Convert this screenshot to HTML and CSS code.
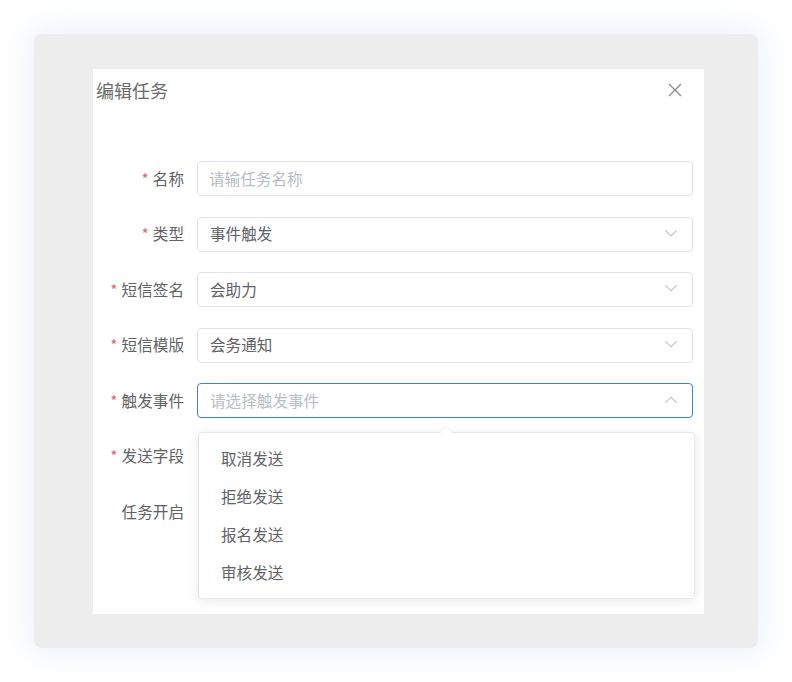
FILE: index.html
```html
<!DOCTYPE html>
<html lang="zh-CN">
<head>
    <meta charset="UTF-8">
    <meta name="viewport" content="width=device-width, initial-scale=1.0">
    <title>编辑任务</title>
    <link rel="stylesheet" href="styles.css">
</head>
<body>
    <!-- Gray mask panel holding the dialog -->
    <div class="panel">
        <div class="dialog">
            <div class="dialog-header">
                <span class="dialog-title">编辑任务</span>
                <svg class="close-icon" viewBox="0 0 14 14" width="14" height="14">
                    <path d="M1 1 L13 13 M13 1 L1 13" />
                </svg>
            </div>

            <form class="task-form">
                <div class="form-item">
                    <label class="form-label required">名称</label>
                    <div class="form-control">
                        <input class="text-input" type="text" placeholder="请输任务名称">
                    </div>
                </div>

                <div class="form-item">
                    <label class="form-label required">类型</label>
                    <div class="form-control">
                        <div class="select">
                            <span class="select-value">事件触发</span>
                            <svg class="arrow" viewBox="0 0 12 7" width="12" height="7"><path d="M0.5 0.5 L6 6 L11.5 0.5" /></svg>
                        </div>
                    </div>
                </div>

                <div class="form-item">
                    <label class="form-label required">短信签名</label>
                    <div class="form-control">
                        <div class="select">
                            <span class="select-value">会助力</span>
                            <svg class="arrow" viewBox="0 0 12 7" width="12" height="7"><path d="M0.5 0.5 L6 6 L11.5 0.5" /></svg>
                        </div>
                    </div>
                </div>

                <div class="form-item">
                    <label class="form-label required">短信模版</label>
                    <div class="form-control">
                        <div class="select">
                            <span class="select-value">会务通知</span>
                            <svg class="arrow" viewBox="0 0 12 7" width="12" height="7"><path d="M0.5 0.5 L6 6 L11.5 0.5" /></svg>
                        </div>
                    </div>
                </div>

                <div class="form-item">
                    <label class="form-label required">触发事件</label>
                    <div class="form-control">
                        <div class="select is-focus">
                            <span class="select-value placeholder">请选择触发事件</span>
                            <svg class="arrow" viewBox="0 0 12 7" width="12" height="7"><path d="M0.5 6.5 L6 1 L11.5 6.5" /></svg>
                        </div>
                        <!-- open dropdown -->
                        <div class="dropdown">
                            <span class="dropdown-caret"></span>
                            <ul class="dropdown-list">
                                <li>取消发送</li>
                                <li>拒绝发送</li>
                                <li>报名发送</li>
                                <li>审核发送</li>
                            </ul>
                        </div>
                    </div>
                </div>

                <div class="form-item">
                    <label class="form-label required">发送字段</label>
                    <div class="form-control"></div>
                </div>

                <div class="form-item">
                    <label class="form-label">任务开启</label>
                    <div class="form-control"></div>
                </div>
            </form>
        </div>
    </div>
</body>
</html>
```

FILE: styles.css
```css
* {
    margin: 0;
    padding: 0;
    box-sizing: border-box;
}

html, body {
    height: 100%;
    background: #ffffff;
    font-family: 'Noto Sans CJK SC', 'Noto Sans', sans-serif;
    color: #606266;
}

body {
    padding: 34px;
}

.panel {
    width: 724px;
    height: 614px;
    padding: 35px 54px 34px 59px;
    background: #ededed;
    border-radius: 8px;
    box-shadow: 0 0 30px 6px rgba(214, 226, 245, 0.45);
}

.dialog {
    width: 611px;
    height: 545px;
    background: #ffffff;
}

.dialog-header {
    display: flex;
    justify-content: space-between;
    align-items: center;
    height: 44px;
    padding: 0 22px 2px 3px;
}

.dialog-title {
    font-size: 18px;
    color: #6b6b6b;
    line-height: 24px;
}

.close-icon {
    fill: none;
    stroke: #8d8f94;
    stroke-width: 1.4;
}

.task-form {
    margin-top: 48px;
    padding-right: 11px;
}

.form-item {
    display: flex;
    align-items: center;
    height: 35px;
    margin-bottom: 20.6px;
}

.form-label {
    width: 104px;
    padding: 0 13px 2px 0;
    text-align: right;
    font-size: 15.6px;
    color: #606266;
    flex-shrink: 0;
}

.form-label.required::before {
    content: '*';
    color: #e06a6a;
    margin-right: 4px;
}

.form-control {
    position: relative;
    flex: 1;
    height: 35px;
}

.text-input {
    width: 100%;
    height: 35px;
    padding: 0 11px 2px;
    border: 1px solid #e1e1ea;
    border-radius: 4px;
    font-family: inherit;
    font-size: 15.6px;
    color: #606266;
    outline: none;
}

.text-input::placeholder {
    color: #b8bcc4;
}

.select {
    display: flex;
    justify-content: space-between;
    align-items: center;
    height: 35px;
    padding: 0 15px 2px 12px;
    border: 1px solid #e1e1ea;
    border-radius: 4px;
    font-size: 15.6px;
}

.select.is-focus {
    border-color: #3f7fe4;
}

.select-value {
    color: #606266;
}

.select-value.placeholder {
    color: #b8bcc4;
}

.arrow {
    fill: none;
    stroke: #c6c8cd;
    stroke-width: 1.2;
}

/* Dropdown of the trigger event select */
.dropdown {
    position: absolute;
    z-index: 10;
    top: 49px;
    left: 1px;
    width: 497px;
    background: #ffffff;
    border: 1px solid #e4e7ed;
    border-radius: 4px;
    box-shadow: 0 2px 12px rgba(0, 0, 0, 0.09);
}

.dropdown-caret {
    position: absolute;
    top: -7px;
    left: 247px;
    width: 12px;
    height: 12px;
    background: #ffffff;
    border-top: 1px solid #ebeef5;
    border-left: 1px solid #ebeef5;
    transform: translateX(-50%) rotate(45deg) scale(0.7);
}

.dropdown-list {
    list-style: none;
    padding: 6px 0 7px;
}

.dropdown-list li {
    height: 38px;
    line-height: 38px;
    padding: 0 22px;
    font-size: 15.6px;
    color: #606266;
}
```
